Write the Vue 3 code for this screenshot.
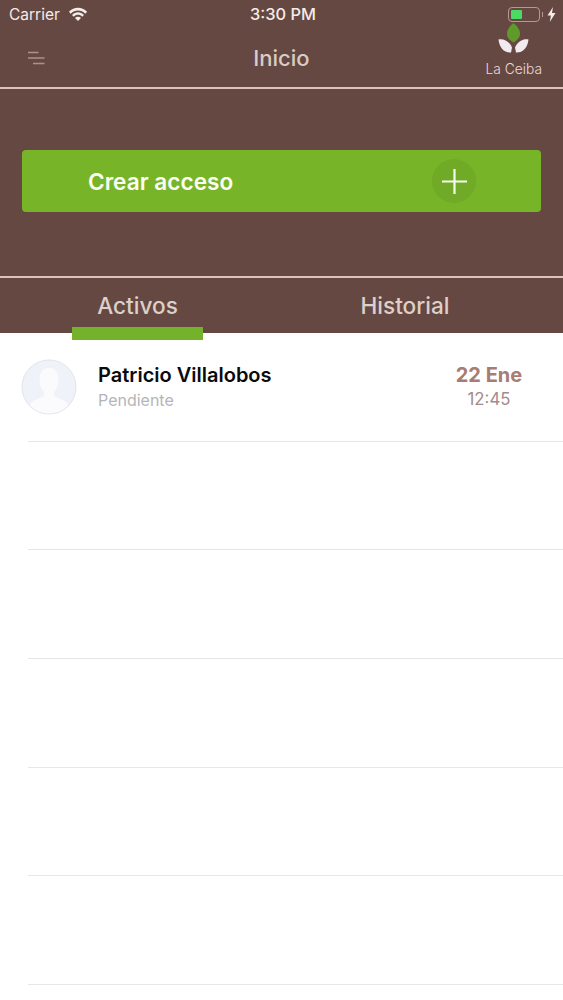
<script setup>
const filas = [
  { id: 1, nombre: 'Patricio Villalobos', estado: 'Pendiente', fecha: '22 Ene', hora: '12:45' },
  { id: 2 },
  { id: 3 },
  { id: 4 },
  { id: 5 },
  { id: 6 }
]
</script>

<template>
  <div class="pantalla">
    <header class="cabecera">
      <div class="status">
        <div class="status-izq">
          <span>Carrier</span>
          <svg class="wifi" width="20" height="14" viewBox="0 0 19 14">
            <path d="M0.4 4.8C5.5 -0.6 13.5 -0.6 18.6 4.8L16.8 6.7C12.6 2.5 6.4 2.5 2.2 6.7Z" fill="#f5ece8"/>
            <path d="M3.5 7.9C7 4.2 12 4.2 15.5 7.9L13.7 9.7C11.1 7.1 7.9 7.1 5.3 9.7Z" fill="#f5ece8"/>
            <path d="M6.5 10.9C8.3 9.2 10.7 9.2 12.5 10.9L9.5 13.9Z" fill="#f5ece8"/>
          </svg>
        </div>
        <span class="hora">3:30 PM</span>
        <div class="status-der">
          <div class="bateria"><div class="carga"></div></div>
          <span class="polo"></span>
          <svg width="9" height="15" viewBox="0 0 9 15">
            <path d="M6 0L0.5 8.4H3.9L2.8 15L8.5 5.9H5Z" fill="#f5ece8"/>
          </svg>
        </div>
      </div>

      <nav class="barra">
        <svg class="menu" width="17" height="14" viewBox="0 0 17 14">
          <path d="M0 1.5H10.5M0 7H16.5M5 12.5H16.5" stroke="#ab9288" stroke-width="1.3" fill="none"/>
        </svg>
        <span class="titulo">Inicio</span>
        <div class="marca">
          <svg width="33" height="30" viewBox="0 0 33 30">
            <path d="M1.5 16.5C6.5 15.5 12 18 15 24.5L14 29.5C7 29.8 2.5 25 1.5 16.5Z" fill="#f1ebf0"/>
            <path d="M31.5 16.5C26.5 15.5 21 18 18 24.5L19 29.5C26 29.8 30.5 25 31.5 16.5Z" fill="#f1ebf0"/>
            <path d="M16.5 0C20 3 23 6.5 23 11C23 14.5 20 17.5 16.5 19.5C13 17.5 10 14.5 10 11C10 6.5 13 3 16.5 0Z" fill="#5f9a2a"/>
          </svg>
          <span>La Ceiba</span>
        </div>
      </nav>

      <section class="accion">
        <button class="crear">
          <span>Crear acceso</span>
          <span class="mas">
            <svg width="25" height="25" viewBox="0 0 25 25">
              <path d="M12.5 0V25M0 12.5H25" stroke="#f6fbef" stroke-width="2.2" fill="none"/>
            </svg>
          </span>
        </button>
      </section>

      <div class="pestanas">
        <div class="pestana activa">Activos</div>
        <div class="pestana">Historial</div>
      </div>
    </header>

    <ul class="lista">
      <li v-for="fila in filas" :key="fila.id" class="fila">
        <template v-if="fila.nombre">
          <svg class="avatar" width="56" height="56" viewBox="0 0 56 56">
            <defs>
              <clipPath id="circulo"><circle cx="28" cy="28" r="26.5"/></clipPath>
            </defs>
            <circle cx="28" cy="28" r="27" fill="#f0f2fa" stroke="#e2e4ec" stroke-width="1"/>
            <g clip-path="url(#circulo)" fill="#fbfbfe">
              <path d="M28 9C35 9 38 15 37.5 22C37 27 35 31 33 33V37C38 40 46 41 48 48V56H8V48C10 41 18 40 23 37V33C21 31 19 27 18.5 22C18 15 21 9 28 9Z"/>
            </g>
          </svg>
          <div class="datos">
            <div class="nombre">{{ fila.nombre }}</div>
            <div class="estado">{{ fila.estado }}</div>
          </div>
          <div class="cuando">
            <div class="fecha">{{ fila.fecha }}</div>
            <div class="tiempo">{{ fila.hora }}</div>
          </div>
        </template>
      </li>
    </ul>
  </div>
</template>

<style scoped>
.pantalla {
  width: 563px;
  height: 1000px;
  overflow: hidden;
  background: #fff;
  font-family: Inter, "Liberation Sans", sans-serif;
}

.cabecera {
  background: #664843;
  height: 333px;
  position: relative;
}

.status {
  height: 28px;
  padding: 0 7px 0 9px;
  display: flex;
  align-items: center;
  justify-content: space-between;
  color: #f5ece8;
  font-size: 15.5px;
  position: relative;
}

.status-izq {
  display: flex;
  align-items: center;
  gap: 8px;
}

.wifi {
  margin-top: -1px;
}

.hora {
  position: absolute;
  left: 3px;
  right: 0;
  text-align: center;
  font-size: 16.4px;
  font-weight: 500;
}

.status-der {
  display: flex;
  align-items: center;
}

.bateria {
  width: 32px;
  height: 15px;
  border: 1px solid #b49a90;
  border-radius: 4px;
  padding: 2px;
  box-sizing: border-box;
}

.carga {
  width: 11px;
  height: 100%;
  background: #4cd964;
  border-radius: 1px;
}

.polo {
  width: 1px;
  height: 5px;
  background: #b49a90;
  margin: 0 4px 0 2px;
}

.barra {
  height: 59px;
  border-bottom: 2px solid #dcc4ba;
  display: flex;
  align-items: center;
  justify-content: space-between;
  padding: 0 21px 0 28px;
  position: relative;
}

.titulo {
  position: absolute;
  left: 0;
  right: 0;
  text-align: center;
  color: #d8ccc3;
  font-size: 22px;
  font-weight: 500;
}

.marca {
  display: flex;
  flex-direction: column;
  align-items: center;
  gap: 8px;
  margin-top: -16px;
  color: #e6dbd6;
  font-size: 13.8px;
  font-weight: 300;
  position: relative;
}

.accion {
  height: 187px;
  padding: 61px 22px 0;
  box-sizing: border-box;
}

.crear {
  width: 100%;
  height: 62px;
  border: 0;
  border-radius: 4px;
  background: #78b428;
  color: #fbfdf5;
  font-family: inherit;
  font-size: 22.6px;
  font-weight: 600;
  display: flex;
  align-items: center;
  justify-content: space-between;
  padding: 0 65px 0 66px;
}

.mas {
  width: 44px;
  height: 44px;
  border-radius: 50%;
  background: #70aa27;
  display: flex;
  align-items: center;
  justify-content: center;
}

.pestanas {
  border-top: 2px solid #dcc4ba;
  height: 55px;
  display: grid;
  grid-template-columns: 275px 1fr;
}

.pestana {
  color: #dcd0c8;
  font-size: 22.6px;
  font-weight: 500;
  text-align: center;
  padding-top: 14px;
  position: relative;
}

.pestana:last-child {
  padding-right: 28px;
}

.pestana.activa::after {
  content: "";
  position: absolute;
  left: 72px;
  bottom: -7px;
  width: 131px;
  height: 13px;
  background: #73b22a;
}

.lista {
  list-style: none;
  margin: 0;
  padding: 0 0 0 28px;
}

.fila {
  height: 108.7px;
  box-sizing: border-box;
  border-bottom: 1px solid #e8e6e6;
  display: flex;
  align-items: center;
  position: relative;
}

.avatar {
  margin: 1px 0 0 -7px;
  flex: none;
}

.datos {
  margin: -1px 0 0 21px;
  flex: 1;
}

.nombre {
  color: #0b0b0d;
  font-size: 20px;
  font-weight: 600;
}

.estado {
  color: #b5b5b8;
  font-size: 16px;
  margin-top: 3px;
}

.cuando {
  width: 96px;
  margin: -1px 26px 0 0;
  text-align: center;
}

.fecha {
  color: #a67c74;
  font-size: 20px;
  font-weight: 700;
}

.tiempo {
  color: #a58a8a;
  font-size: 16.8px;
  margin-top: 2px;
}
</style>
